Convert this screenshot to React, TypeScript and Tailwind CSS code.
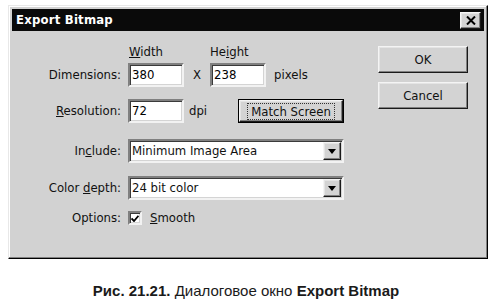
import React from "react";

const font = { fontFamily: "'DejaVu Sans Condensed', 'DejaVu Sans', 'Liberation Sans', sans-serif" };

function Sunken({ className = "", children }: { className?: string; children?: React.ReactNode }) {
  return (
    <div
      className={
        "border-2 border-t-[#808080] border-l-[#808080] border-b-[#f2f2f2] border-r-[#f2f2f2] bg-white shadow-[inset_1px_1px_0_#3a3a3a,inset_-1px_-1px_0_#d4d4d4] " +
        className
      }
    >
      {children}
    </div>
  );
}

function Raised({ className = "", children }: { className?: string; children?: React.ReactNode }) {
  return (
    <div
      className={
        "flex items-center justify-center border border-t-[#f4f4f4] border-l-[#f4f4f4] border-b-[#1a1a1a] border-r-[#1a1a1a] bg-[#d3d3d3] shadow-[inset_-1px_-1px_0_#808080,inset_1px_1px_0_#e4e4e4] " +
        className
      }
    >
      {children}
    </div>
  );
}

function Dropdown({ value }: { value: string }) {
  return (
    <Sunken className="w-[216px] h-[24px] flex items-center justify-between">
      <span className="pl-[2px] text-[13px] text-[#111]">{value}</span>
      <Raised className="w-[18px] h-[18px] mr-[1px]">
        <svg width="8" height="5" viewBox="0 0 8 5">
          <path d="M0 0h8L4 5z" fill="#000" />
        </svg>
      </Raised>
    </Sunken>
  );
}

function Label({ children }: { children: React.ReactNode }) {
  return <div className="w-[116px] pr-[7px] text-right text-[13px] text-[#111]">{children}</div>;
}

export default function App() {
  return (
    <div className="w-[492px] h-[304px] bg-white relative overflow-hidden" style={font}>
      {/* Dialog */}
      <div className="ml-[8px] mt-[5px] w-[480px] h-[254px] border border-t-[#e8e8e8] border-l-[#e8e8e8] border-b-black border-r-black bg-[#d2d2d2] shadow-[inset_-1px_-1px_0_#808080,inset_1px_1px_0_#ffffff] flex flex-col p-[3px]">
        {/* Title bar */}
        <div className="h-[22px] bg-[#0a0a0a] flex items-center justify-between pl-[4px] pr-[3px]">
          <span className="text-white font-bold text-[13px] tracking-[0.2px]">Export Bitmap</span>
          <Raised className="w-[21px] h-[17px]">
            <svg width="10" height="9" viewBox="0 0 10 9">
              <path d="M1 0.5L9 8.5M9 0.5L1 8.5" stroke="#000" strokeWidth="2" />
            </svg>
          </Raised>
        </div>

        {/* Body */}
        <div className="flex flex-1">
          {/* Form */}
          <div className="flex flex-col w-[362px]">
            {/* Column headers */}
            <div className="flex items-end h-[32px] pb-[2px] text-[13px] text-[#111]">
              <div className="w-[116px]" />
              <span className="w-[82px] pl-[1px]">
                <u>W</u>idth
              </span>
              <span>
                He<u>i</u>ght
              </span>
            </div>

            {/* Dimensions */}
            <div className="flex items-center h-[24px]">
              <Label>Dimensions:</Label>
              <Sunken className="w-[56px] h-[24px] flex items-center pl-[2px] text-[13px]">380</Sunken>
              <span className="w-[26px] text-center text-[13px] text-[#111]">X</span>
              <Sunken className="w-[56px] h-[24px] flex items-center pl-[2px] text-[13px]">238</Sunken>
              <span className="pl-[8px] text-[13px] text-[#111]">pixels</span>
            </div>

            {/* Resolution */}
            <div className="flex items-center h-[24px] mt-[12px]">
              <Label>
                <u>R</u>esolution:
              </Label>
              <Sunken className="w-[56px] h-[24px] flex items-center pl-[2px] text-[13px]">72</Sunken>
              <span className="pl-[5px] w-[54px] text-[13px] text-[#111]">dpi</span>
              <div className="border border-black">
                <Raised className="w-[104px] h-[22px] text-[13px] text-[#111]">
                  <span className="border border-dotted border-[#333] px-[3px] leading-[15px]">Match Screen</span>
                </Raised>
              </div>
            </div>

            {/* Include */}
            <div className="flex items-center h-[24px] mt-[16px]">
              <Label>
                In<u>c</u>lude:
              </Label>
              <Dropdown value="Minimum Image Area" />
            </div>

            {/* Color depth */}
            <div className="flex items-center h-[24px] mt-[13px]">
              <Label>
                Color <u>d</u>epth:
              </Label>
              <Dropdown value="24 bit color" />
            </div>

            {/* Options */}
            <div className="flex items-center h-[16px] mt-[10px]">
              <Label>Options:</Label>
              <Sunken className="w-[14px] h-[14px] flex items-center justify-center">
                <svg width="8" height="7" viewBox="0 0 8 7">
                  <path d="M0.5 3.5L3 6L7.5 0.8" stroke="#000" strokeWidth="1.8" fill="none" />
                </svg>
              </Sunken>
              <span className="pl-[8px] text-[13px] text-[#111]">
                <u>S</u>mooth
              </span>
            </div>
          </div>

          {/* Buttons */}
          <div className="flex flex-col gap-[9px] pt-[15px] pl-[4px]">
            <Raised className="w-[90px] h-[27px] text-[13px] text-[#111]">OK</Raised>
            <Raised className="w-[90px] h-[27px] text-[13px] text-[#111]">Cancel</Raised>
          </div>
        </div>
      </div>

      {/* Caption */}
      <div
        className="mt-[21px] text-center text-[15px] text-[#1a1a1a]"
        style={{ fontFamily: "'Liberation Sans', Arial, sans-serif" }}
      >
        <b>Рис. 21.21.</b> Диалоговое окно <b>Export Bitmap</b>
      </div>
    </div>
  );
}
